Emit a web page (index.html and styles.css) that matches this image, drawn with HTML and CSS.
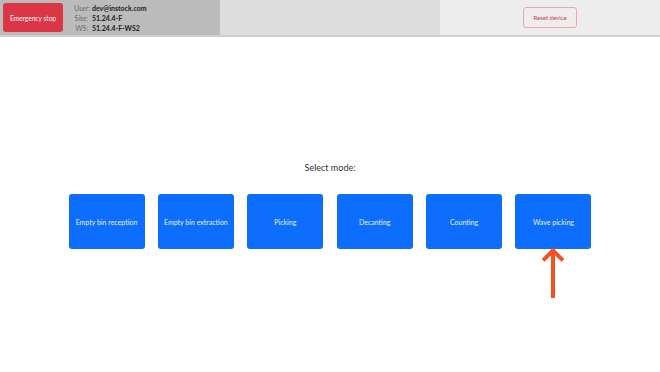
FILE: index.html
```html
<!DOCTYPE html>
<html lang="en">
<head>
    <meta charset="UTF-8">
    <meta name="viewport" content="width=device-width, initial-scale=1.0">
    <title>Select mode</title>
    <link rel="stylesheet" href="styles.css">
</head>
<body>

<div class="topbar">
    <div class="panel panel-left">
        <button class="btn-emergency">Emergency stop</button>
        <div class="info">
            <span class="info-label">User:</span><span class="info-value">dev@instock.com</span>
            <span class="info-label">Site:</span><span class="info-value">51.24.4-F</span>
            <span class="info-label">WS:</span><span class="info-value">51.24.4-F-WS2</span>
        </div>
    </div>
    <div class="panel panel-middle"></div>
    <div class="panel panel-right">
        <button class="btn-reset">Reset device</button>
    </div>
</div>

<div class="main">
    <div class="title">Select mode:</div>
    <div class="modes">
        <button class="mode">Empty bin reception</button>
        <button class="mode">Empty bin extraction</button>
        <button class="mode">Picking</button>
        <button class="mode">Decanting</button>
        <button class="mode">Counting</button>
        <div class="mode-marked">
            <button class="mode">Wave picking</button>
            <div class="pointer">
                <div class="pointer-head"></div>
                <div class="pointer-shaft"></div>
            </div>
        </div>
    </div>
</div>

</body>
</html>
```

FILE: styles.css
```css
body {
    margin: 0;
    font-family: 'Lato', 'Open Sans', sans-serif;
    background-color: #FFFFFF;
    color: #212529;
}

button {
    font-family: 'Lato', 'Open Sans', sans-serif;
    cursor: pointer;
}

.topbar {
    display: flex;
    height: 35px;
    border-bottom: 2px solid #d0d0d0;
}

.panel {
    width: 220px;
    box-sizing: border-box;
    display: flex;
    align-items: center;
}

.panel-left {
    background-color: #bbbbbb;
    padding: 0 3px;
    gap: 11px;
}

.panel-middle {
    background-color: #dddddd;
}

.panel-right {
    background-color: #ededed;
    justify-content: center;
}

.btn-emergency {
    width: 60px;
    height: 29px;
    border: none;
    border-radius: 3px;
    background-color: #dc3545;
    color: #FFFFFF;
    font-size: 6.6px;
    padding: 0;
}

.info {
    display: grid;
    grid-template-columns: 14px auto;
    column-gap: 4px;
    font-size: 7px;
    line-height: 10px;
}

.info-label {
    color: #6c6c6c;
    text-align: right;
}

.info-value {
    color: #222222;
    font-weight: 700;
}

.btn-reset {
    width: 54px;
    height: 21px;
    border: 1px solid #eea4ab;
    border-radius: 3px;
    background-color: transparent;
    color: #dc3545;
    font-size: 6px;
    padding: 0;
}

.main {
    display: flex;
    flex-direction: column;
    align-items: center;
    padding-top: 125px;
}

.title {
    font-size: 9px;
    color: #333333;
    margin-bottom: 21px;
}

.modes {
    display: flex;
    align-items: flex-start;
    gap: 13.4px;
}

.mode {
    width: 76px;
    height: 55px;
    border: none;
    border-radius: 3px;
    background-color: #0d6efd;
    color: #e8f0ff;
    font-size: 7px;
    padding: 0;
}

.mode-marked {
    display: flex;
    flex-direction: column;
    align-items: center;
}

.pointer {
    display: flex;
    flex-direction: column;
    align-items: center;
    padding-top: 2px;
}

.pointer-head {
    width: 12px;
    height: 12px;
    margin-bottom: -15px;
    border-top: 4px solid #f4511e;
    border-left: 4px solid #f4511e;
    transform: rotate(45deg);
}

.pointer-shaft {
    width: 4px;
    height: 46px;
    background-color: #f4511e;
}
```
